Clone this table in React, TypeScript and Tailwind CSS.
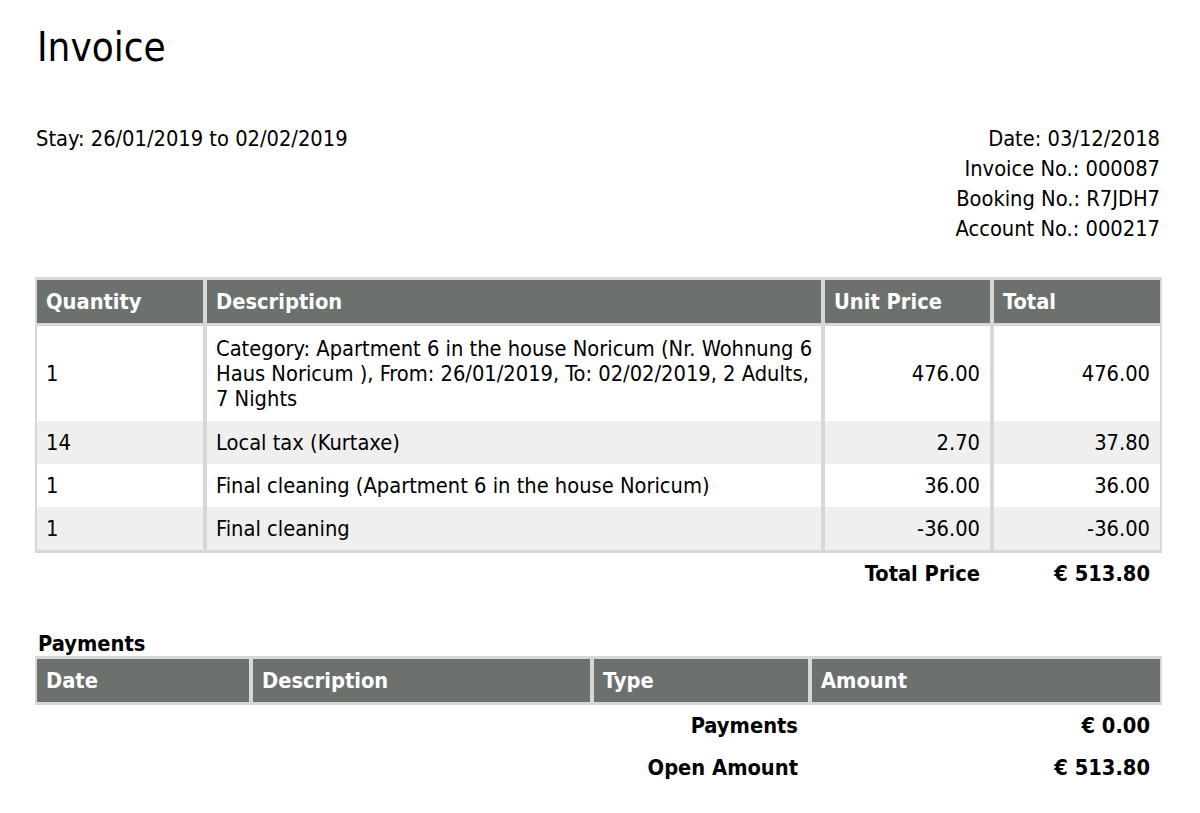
import React from "react";

const items = [
  {
    qty: "1",
    desc: [
      "Category: Apartment 6 in the house Noricum (Nr. Wohnung 6",
      "Haus Noricum ), From: 26/01/2019, To: 02/02/2019, 2 Adults,",
      "7 Nights",
    ],
    unit: "476.00",
    total: "476.00",
  },
  { qty: "14", desc: ["Local tax (Kurtaxe)"], unit: "2.70", total: "37.80" },
  {
    qty: "1",
    desc: ["Final cleaning (Apartment 6 in the house Noricum)"],
    unit: "36.00",
    total: "36.00",
  },
  { qty: "1", desc: ["Final cleaning"], unit: "-36.00", total: "-36.00" },
];

const cell = "flex items-center pl-[9px] pr-[10px] py-[9px] leading-[25px] whitespace-nowrap";
const sumCell = "flex items-center justify-end px-[10px] py-[9px] leading-[24px] whitespace-nowrap";

export default function App() {
  return (
    <div className="min-h-[813px] bg-white pl-[35px] pr-[38px] pt-[22px] text-black font-['DejaVu_Sans_Condensed','DejaVu_Sans',sans-serif] text-[21.7px]">
      <h1 className="ml-[2px] text-[40px] leading-[50px] font-normal">Invoice</h1>

      <div className="mt-[52px] flex items-start justify-between ml-px mr-[2px] leading-[30px]">
        <div>Stay: 26/01/2019 to 02/02/2019</div>
        <div className="text-right">
          <div>Date: 03/12/2018</div>
          <div>Invoice No.: 000087</div>
          <div>Booking No.: R7JDH7</div>
          <div>Account No.: 000217</div>
        </div>
      </div>

      {/* Items table */}
      <div className="mt-[33px] bg-[#d7d7d7] px-[2px] py-[3px]">
        <div className="grid grid-cols-[166px_614px_165px_166px] gap-x-[4px] font-bold text-white">
          <div className={`${cell} bg-[#6c716e]`}>Quantity</div>
          <div className={`${cell} bg-[#6c716e]`}>Description</div>
          <div className={`${cell} bg-[#6c716e]`}>Unit Price</div>
          <div className={`${cell} bg-[#6c716e]`}>Total</div>
        </div>
        <div className="mt-[3px] flex flex-col">
          {items.map((it, i) => {
            const bg = i % 2 === 0 ? "bg-white" : "bg-[#efefef]";
            return (
              <div
                key={i}
                className="grid grid-cols-[166px_614px_165px_166px] gap-x-[4px]"
              >
                <div className={`${cell} ${bg}`}>{it.qty}</div>
                <div className={`${cell} ${bg} ${i === 0 ? "py-[10px]" : ""}`}>
                  <div>
                    {it.desc.map((l, j) => (
                      <div key={j}>{l}</div>
                    ))}
                  </div>
                </div>
                <div className={`${cell} ${bg} justify-end`}>{it.unit}</div>
                <div className={`${cell} ${bg} justify-end`}>{it.total}</div>
              </div>
            );
          })}
        </div>
      </div>

      <div className="grid grid-cols-[166px_614px_165px_166px] gap-x-[4px] px-[2px] font-bold">
        <div />
        <div />
        <div className={sumCell}>Total Price</div>
        <div className={sumCell}>€ 513.80</div>
      </div>

      {/* Payments */}
      <div className="mt-[36px] ml-[3px] font-bold leading-[25px]">Payments</div>
      <div className="bg-[#d7d7d7] px-[2px] py-[3px]">
        <div className="grid grid-cols-[212px_337px_214px_348px] gap-x-[4px] font-bold text-white">
          <div className={`${cell} bg-[#6c716e]`}>Date</div>
          <div className={`${cell} bg-[#6c716e]`}>Description</div>
          <div className={`${cell} bg-[#6c716e]`}>Type</div>
          <div className={`${cell} bg-[#6c716e]`}>Amount</div>
        </div>
      </div>

      <div className="grid grid-cols-[212px_337px_214px_348px] gap-x-[4px] px-[2px] font-bold">
        <div />
        <div />
        <div className={sumCell}>Payments</div>
        <div className={sumCell}>€ 0.00</div>
        <div />
        <div />
        <div className={sumCell}>Open Amount</div>
        <div className={sumCell}>€ 513.80</div>
      </div>
    </div>
  );
}
